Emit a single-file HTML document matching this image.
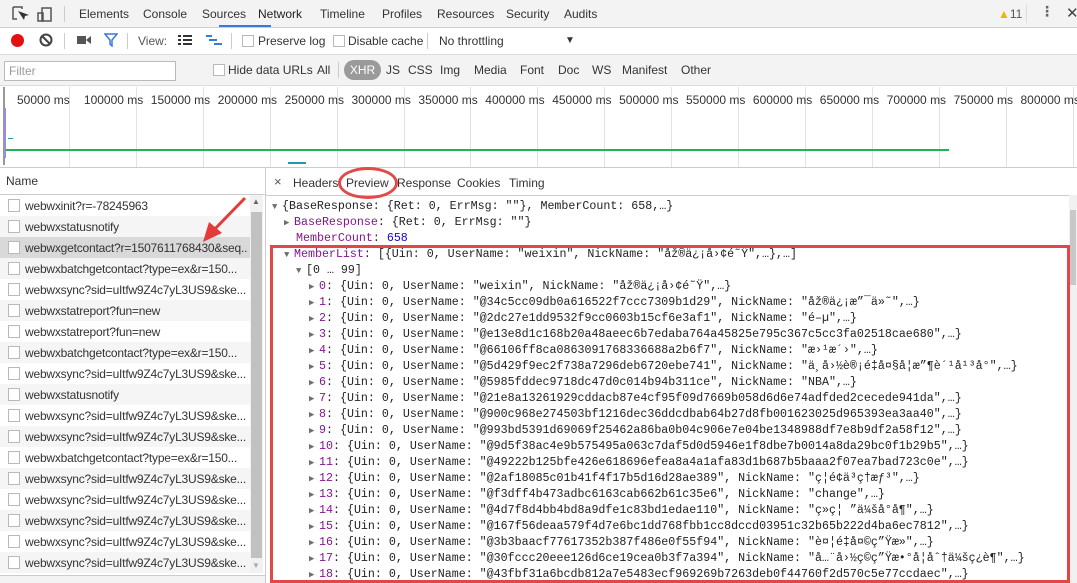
<!DOCTYPE html>
<html><head><meta charset="utf-8">
<style>
*{margin:0;padding:0;box-sizing:border-box}
body{width:1077px;height:583px;overflow:hidden;background:#fff;font-family:"Liberation Sans","DejaVu Sans",sans-serif;font-size:12px;color:#333;position:relative}
.a{position:absolute;white-space:nowrap}
.mono{font-family:"Liberation Mono","DejaVu Sans Mono",monospace;font-size:11.65px;color:#222}
.k{color:#881391}
.n{color:#1c00cf}
.tri{color:#6e6e6e;font-size:9px;display:inline-block;width:10px}
.cb{position:absolute;width:12px;height:12px;border:1px solid #b9b9b9;background:#fff}
.nm{overflow:hidden;text-overflow:clip;width:222px}
</style></head><body>
<div class="a" style="left:0;top:0;width:1077px;height:28px;background:#f3f3f3;border-bottom:1px solid #cfcfcf"></div>
<svg class="a" style="left:10px;top:5px" width="48" height="18" viewBox="0 0 48 18">
<path d="M3 2h9v2M3 2v12h4" fill="none" stroke="#555" stroke-width="1.5"/>
<path d="M8 6l6 9 1-4 4-1z" fill="#333"/>
<rect x="32" y="3" width="9" height="13" fill="none" stroke="#555" stroke-width="1.5"/>
<rect x="28" y="8" width="5" height="8" fill="none" stroke="#555" stroke-width="1.5"/>
</svg>
<div class="a" style="left:64px;top:6px;width:1px;height:16px;background:#ccc"></div>
<div class="a" style="left:79px;top:7px">Elements</div>
<div class="a" style="left:143px;top:7px">Console</div>
<div class="a" style="left:202px;top:7px">Sources</div>
<div class="a" style="left:258px;top:7px;color:#222">Network</div>
<div class="a" style="left:219px;top:25px;width:52px;height:2px;background:#3879d9"></div>
<div class="a" style="left:320px;top:7px">Timeline</div>
<div class="a" style="left:382px;top:7px">Profiles</div>
<div class="a" style="left:437px;top:7px">Resources</div>
<div class="a" style="left:506px;top:7px">Security</div>
<div class="a" style="left:564px;top:7px">Audits</div>
<div class="a" style="left:998px;top:7px;color:#555"><span style="color:#f0b400">▲</span>11</div>
<div class="a" style="left:1026px;top:5px;width:1px;height:18px;background:#ddd"></div>
<div class="a" style="left:1040px;top:3px;font-weight:bold;color:#666;font-size:14px">⋮</div>
<div class="a" style="left:1066px;top:4px;font-size:15px;color:#444">✕</div>
<div class="a" style="left:0;top:28px;width:1077px;height:27px;background:#fff;border-bottom:1px solid #ddd"></div>
<div class="a" style="left:11px;top:34px;width:13px;height:13px;border-radius:50%;background:#e31010"></div>
<svg class="a" style="left:39px;top:33px" width="14" height="14"><circle cx="7" cy="7" r="5.5" fill="none" stroke="#444" stroke-width="2"/><path d="M3 3l8 8" stroke="#444" stroke-width="2"/></svg>
<div class="a" style="left:64px;top:33px;width:1px;height:16px;background:#ccc"></div>
<svg class="a" style="left:77px;top:35px" width="14" height="10"><rect x="0" y="1" width="9" height="8" fill="#555"/><path d="M9 5l5-4v8z" fill="#555"/></svg>
<svg class="a" style="left:104px;top:33px" width="14" height="14"><path d="M1 1h12l-5 6v6l-2-2v-4z" fill="none" stroke="#3879d9" stroke-width="1.5"/></svg>
<div class="a" style="left:127px;top:33px;width:1px;height:16px;background:#ccc"></div>
<div class="a" style="left:138px;top:34px;color:#555">View:</div>
<svg class="a" style="left:178px;top:35px" width="14" height="11"><path d="M0 1h3M5 1h9M0 5h3M5 5h9M0 9h3M5 9h9" stroke="#333" stroke-width="2"/></svg>
<svg class="a" style="left:206px;top:35px" width="16" height="11"><path d="M0 1h6M3 5h8M8 9h8" stroke="#3879d9" stroke-width="2"/></svg>
<div class="a" style="left:231px;top:33px;width:1px;height:16px;background:#ccc"></div>
<div class="cb" style="left:242px;top:35px"></div>
<div class="a" style="left:258px;top:34px">Preserve log</div>
<div class="cb" style="left:333px;top:35px"></div>
<div class="a" style="left:348px;top:34px">Disable cache</div>
<div class="a" style="left:427px;top:33px;width:1px;height:16px;background:#ccc"></div>
<div class="a" style="left:439px;top:34px">No throttling</div>
<div class="a" style="left:565px;top:35px;font-size:10px;color:#333">▼</div>
<div class="a" style="left:0;top:55px;width:1077px;height:31px;background:#f3f3f3;border-bottom:1px solid #ddd"></div>
<div class="a" style="left:4px;top:61px;width:172px;height:20px;background:#fff;border:1px solid #bbb;padding:2px 4px;color:#999">Filter</div>
<div class="cb" style="left:213px;top:64px"></div>
<div class="a" style="left:228px;top:63px">Hide data URLs</div>
<div class="a" style="left:317px;top:63px">All</div>
<div class="a" style="left:338px;top:62px;width:1px;height:16px;background:#ccc"></div>
<div class="a" style="left:344px;top:60px;width:37px;height:20px;border-radius:10px;background:#9a9a9a;color:#fff;text-align:center;line-height:20px">XHR</div>
<div class="a" style="left:386px;top:63px">JS</div>
<div class="a" style="left:408px;top:63px">CSS</div>
<div class="a" style="left:440px;top:63px">Img</div>
<div class="a" style="left:474px;top:63px">Media</div>
<div class="a" style="left:520px;top:63px">Font</div>
<div class="a" style="left:558px;top:63px">Doc</div>
<div class="a" style="left:592px;top:63px">WS</div>
<div class="a" style="left:622px;top:63px">Manifest</div>
<div class="a" style="left:681px;top:63px">Other</div>
<div class="a" style="left:3px;top:87px;width:2px;height:78px;background:#999"></div>
<div id="tl"></div>
<div class="a" style="left:5px;top:149px;width:944px;height:2px;background:#1fb35a"></div>
<div class="a" style="left:4px;top:108px;width:2px;height:50px;background:#9a8cd6"></div>
<div class="a" style="left:8px;top:138px;width:5px;height:1px;background:#1a9ea8"></div>
<div class="a" style="left:288px;top:162px;width:18px;height:2px;background:#1a9ea8"></div>
<div class="a" style="left:0;top:167px;width:1077px;height:1px;background:#ccc"></div>
<div class="a" style="left:0;top:168px;width:265px;height:27px;background:#fff;border-bottom:1px solid #ccc"></div>
<div class="a" style="left:6px;top:174px;color:#333">Name</div>
<div class="a" style="left:265px;top:168px;width:1px;height:415px;background:#ccc"></div>
<div id="rows"></div>
<div class="a" style="left:250px;top:195px;width:13px;height:378px;background:#f1f1f1"></div>
<div class="a" style="left:251px;top:212px;width:11px;height:346px;background:#c1c1c1"></div>
<div class="a" style="left:252px;top:197px;font-size:8px;color:#666">▲</div>
<div class="a" style="left:252px;top:561px;font-size:8px;color:#aaa">▼</div>
<div class="a" style="left:0;top:575px;width:265px;height:8px;background:#f3f3f3;border-top:1px solid #ccc"></div>
<div class="a" style="left:266px;top:195px;width:811px;height:1px;background:#ccc"></div>
<div class="a" style="left:274px;top:174px;font-size:13px;color:#555">×</div>
<div class="a" style="left:293px;top:176px">Headers</div>
<div class="a" style="left:346px;top:176px">Preview</div>
<div class="a" style="left:397px;top:176px">Response</div>
<div class="a" style="left:457px;top:176px">Cookies</div>
<div class="a" style="left:509px;top:176px">Timing</div>
<div class="a" style="left:338px;top:167px;width:60px;height:32px;border:3px solid #e04a4a;border-radius:50%"></div>
<div class="a" style="left:1069px;top:195px;width:8px;height:388px;background:#f1f1f1"></div>
<div class="a" style="left:1070px;top:210px;width:6px;height:75px;background:#c8c8c8"></div>
<div id="js"></div>
<div class="a" style="left:270px;top:245px;width:800px;height:338px;border:3px solid #e04848"></div>
<svg class="a" style="left:195px;top:192px" width="60" height="55"><path d="M50 6L17 40" stroke="#e53a3a" stroke-width="3"/><path d="M8 50l6-20 13 11z" fill="#e53a3a"/></svg>
<script>
var tl=document.getElementById('tl'),h='';
var labels=['50000 ms','100000 ms','150000 ms','200000 ms','250000 ms','300000 ms','350000 ms','400000 ms','450000 ms','500000 ms','550000 ms','600000 ms','650000 ms','700000 ms','750000 ms','800000 ms'];
for(var i=0;i<16;i++){var x=69+i*66.9;h+='<div class="a" style="left:'+x+'px;top:87px;width:1px;height:80px;background:#e2e2e2"></div><div class="a" style="left:'+(x-52)+'px;top:93px;width:50px;text-align:right;color:#333">'+labels[i]+'</div>';}
tl.innerHTML=h;
var names=['webwxinit?r=-78245963','webwxstatusnotify','webwxgetcontact?r=1507611768430&amp;seq..','webwxbatchgetcontact?type=ex&amp;r=150...','webwxsync?sid=uItfw9Z4c7yL3US9&amp;ske...','webwxstatreport?fun=new','webwxstatreport?fun=new','webwxbatchgetcontact?type=ex&amp;r=150...','webwxsync?sid=uItfw9Z4c7yL3US9&amp;ske...','webwxstatusnotify','webwxsync?sid=uItfw9Z4c7yL3US9&amp;ske...','webwxsync?sid=uItfw9Z4c7yL3US9&amp;ske...','webwxbatchgetcontact?type=ex&amp;r=150...','webwxsync?sid=uItfw9Z4c7yL3US9&amp;ske...','webwxsync?sid=uItfw9Z4c7yL3US9&amp;ske...','webwxsync?sid=uItfw9Z4c7yL3US9&amp;ske...','webwxsync?sid=uItfw9Z4c7yL3US9&amp;ske...','webwxsync?sid=uItfw9Z4c7yL3US9&amp;ske...'];
h='';
for(var i=0;i<18;i++){var y=195+i*21;var bg=i==2?'#d9d9d9':(i%2?'#f5f5f5':'#fff');
h+='<div class="a" style="left:0;top:'+y+'px;width:250px;height:21px;background:'+bg+'"></div><div class="cb" style="left:8px;top:'+(y+4)+'px;width:12px;height:13px"></div><div class="a nm" style="left:25px;top:'+(y+4)+'px;color:#333;letter-spacing:-0.2px">'+names[i]+'</div>';}
document.getElementById('rows').innerHTML=h;
var items=[
['weixin','åž®ä¿¡å›¢é˜Ÿ'],
['@34c5cc09db0a616522f7ccc7309b1d29','åž®ä¿¡æ”¯ä»˜'],
['@2dc27e1dd9532f9cc0603b15cf6e3af1','é–µ'],
['@e13e8d1c168b20a48aeec6b7edaba764a45825e795c367c5cc3fa02518cae680',null],
['@66106ff8ca0863091768336688a2b6f7','æ›¹æ´›'],
['@5d429f9ec2f738a7296deb6720ebe741','ä¸å›½è®¡é‡å¤§å¦æ”¶è´¹å¹³å°'],
['@5985fddec9718dc47d0c014b94b311ce','NBA'],
['@21e8a13261929cddacb87e4cf95f09d7669b058d6d6e74adfded2cecede941da',null],
['@900c968e274503bf1216dec36ddcdbab64b27d8fb001623025d965393ea3aa40',null],
['@993bd5391d69069f25462a86ba0b04c906e7e04be1348988df7e8b9df2a58f12',null],
['@9d5f38ac4e9b575495a063c7daf5d0d5946e1f8dbe7b0014a8da29bc0f1b29b5',null],
['@49222b125bfe426e618696efea8a4a1afa83d1b687b5baaa2f07ea7bad723c0e',null],
['@2af18085c01b41f4f17b5d16d28ae389','ç¦é¢ä³ç†æƒ³'],
['@f3dff4b473adbc6163cab662b61c35e6','change'],
['@4d7f8d4bb4bd8a9dfe1c83bd1edae110','ç»ç¦ ”ä¼šå°å¶'],
['@167f56deaa579f4d7e6bc1dd768fbb1cc8dccd03951c32b65b222d4ba6ec7812',null],
['@3b3baacf77617352b387f486e0f55f94','è¤¦é‡å¤©ç”Ÿæ»'],
['@30fccc20eee126d6ce19cea0b3f7a394','å…¨å›½ç©ç”Ÿæ•°å¦åˆ†ä¼šç¿è¶'],
['@43fbf31a6bcdb812a7e5483ecf969269b7263deb0f44760f2d570c5e77ccdaec',null]];
function L(x,y,t){return '<div class="a mono" style="left:'+x+'px;top:'+(y-7)+'px">'+t+'</div>';}
var T='<span class="tri">▶</span>',D='<span class="tri">▼</span>';
h='';
h+=L(272,207,D+'{BaseResponse: {Ret: 0, ErrMsg: ""}, MemberCount: 658,…}');
h+=L(284,223,T+'<span class="k">BaseResponse</span>: {Ret: 0, ErrMsg: ""}');
h+=L(296,239,'<span class="k">MemberCount</span>: <span class="n">658</span>');
h+=L(284,255,D+'<span class="k">MemberList</span>: [{Uin: 0, UserName: "weixin", NickName: "åž®ä¿¡å›¢é˜Ÿ",…},…]');
h+=L(296,271,D+'[0 … 99]');
for(var i=0;i<items.length;i++){var it=items[i];
var s=T+'<span class="k">'+i+'</span>: {Uin: 0, UserName: "'+it[0]+'"'+(it[1]!==null?', NickName: "'+it[1]+'"':'')+',…}';
h+=L(309,287+i*16,s);}
document.getElementById('js').innerHTML=h;
</script>
</body></html>
